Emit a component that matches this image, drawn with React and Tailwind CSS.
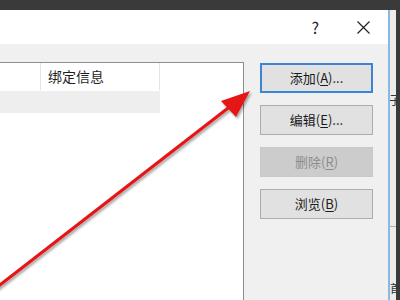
const font = { fontFamily: '"Noto Sans CJK SC", "Noto Sans", sans-serif' };

const buttons = [
  { label: "添加", key: "A", dots: true, focused: true },
  { label: "编辑", key: "E", dots: true },
  { label: "删除", key: "R", disabled: true },
  { label: "浏览", key: "B" },
];

const DialogButton = ({ label, keyChar, dots, focused, disabled }) => {
  let cls = "border border-[#adadad] bg-[#e1e1e1] text-[#1a1a1a]";
  if (focused) cls = "border-2 border-[#3b86d4] bg-[#e1e1e1] text-[#1a1a1a]";
  if (disabled) cls = "border border-[#c8c8c8] bg-[#cccccc] text-[#8d8d8d]";
  return (
    <div className={`flex h-[30px] w-[113px] items-center justify-center text-[13px] ${cls}`}>
      <span>
        {label}(<span className="underline underline-offset-2">{keyChar}</span>){dots ? "..." : ""}
      </span>
    </div>
  );
};

export default function App() {
  return (
    <div className="relative h-[300px] w-[400px] overflow-hidden bg-[#3a3a3a]" style={font}>
      <div className="h-[10px]" />
      <div className="flex h-[290px]">
        <div className="flex w-[390px] flex-col border-r-2 border-[#8bb8e2]">
          {/* title bar */}
          <div className="flex h-[34px] items-center justify-end bg-white pr-[18px]">
            <span className="mr-[38px] text-[16px] text-[#222]">?</span>
            <svg width="13" height="13" viewBox="0 0 13 13">
              <path d="M0.5 0.5 L12.5 12.5 M12.5 0.5 L0.5 12.5" stroke="#222" strokeWidth="1.2" />
            </svg>
          </div>
          {/* body */}
          <div className="flex flex-1 bg-[#f0f0f0] pt-[18px]">
            <div className="w-[244px] border-r border-t border-[#8a8f96] bg-white">
              <div className="flex h-[28px] w-[160px] border-b border-white">
                <div className="w-[41px] border-r border-[#e5e5e5]" />
                <div className="flex w-[119px] items-center border-r border-[#e5e5e5] pl-[7px] text-[14px] text-[#1f1f1f]">
                  绑定信息
                </div>
              </div>
              <div className="h-[22px] w-[160px] bg-[#eeeeee]" />
            </div>
            <div className="ml-[16px] flex flex-col gap-[12px] pt-[1px]">
              {buttons.map((b) => (
                <DialogButton
                  key={b.key}
                  label={b.label}
                  keyChar={b.key}
                  dots={b.dots}
                  focused={b.focused}
                  disabled={b.disabled}
                />
              ))}
            </div>
          </div>
        </div>
        {/* window behind */}
        <div className="flex w-[6px] flex-col overflow-hidden bg-[#ececec]">
          <div className="h-[84px]" />
          <span className="-ml-[1px] text-[12px] leading-none text-[#333]">子</span>
          <div className="mt-[120px] h-px bg-[#b0b0b0]" />
          <div className="flex-1" />
          <span className="mb-[6px] text-[11px] leading-none text-[#333]">首</span>
        </div>
      </div>

      {/* red annotation arrow */}
      <svg className="pointer-events-none absolute left-0 top-0" width="400" height="300" viewBox="0 0 400 300">
        <defs>
          <filter id="sh" x="-10%" y="-10%" width="120%" height="120%">
            <feDropShadow dx="1.5" dy="2" stdDeviation="1.2" floodColor="#000" floodOpacity="0.35" />
          </filter>
        </defs>
        <g filter="url(#sh)">
          <line x1="-4" y1="288" x2="232" y2="105" stroke="#e51717" strokeWidth="3.2" />
          <polygon points="250,91 221,101 236,117" fill="#e51717" />
        </g>
      </svg>
    </div>
  );
}
